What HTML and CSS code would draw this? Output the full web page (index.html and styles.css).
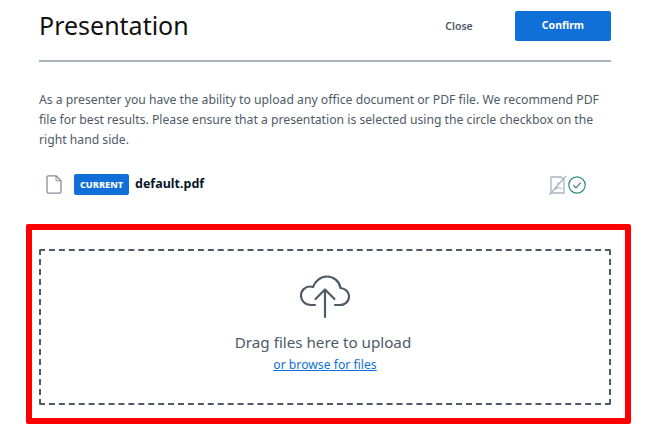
FILE: index.html
```html
<!DOCTYPE html>
<html lang="en">
<head>
<meta charset="utf-8">
<title>Presentation</title>
<link rel="stylesheet" href="styles.css">
</head>
<body>
<main class="modal">
  <header class="header">
    <h1 class="title">Presentation</h1>
    <div class="actions">
      <button class="btn-close" type="button">Close</button>
      <button class="btn-confirm" type="button">Confirm</button>
    </div>
  </header>
  <p class="intro">As a presenter you have the ability to upload any office document or PDF file. We recommend PDF file for best results. Please ensure that a presentation is selected using the circle checkbox on the right hand side.</p>
  <div class="file-row">
    <svg class="file-icon" width="16" height="19" viewBox="0 0 16 19" fill="none" stroke="#868e96" stroke-width="1.3" stroke-linejoin="round"><path d="M2 .8h8l5 5v10.900a1.400 1.400 0 0 1-1.400 1.400H2.400A1.400 1.400 0 0 1 1 16.700V2.200A1.400 1.400 0 0 1 2 .8z"/><path d="M10 .8v5h5" stroke-width="1"/></svg>
    <span class="badge">CURRENT</span>
    <span class="file-name">default.pdf</span>
    <span class="file-tools">
      <svg width="18" height="20" viewBox="0 0 18 20" fill="none" stroke="#a9b4c0" stroke-width="1.300"><path d="M2 2h10l3 3v13H2z"/><path d="M.5 19.500 17 1"/><path d="M6.500 15c1.500-2 3-5 2.500-8M5.500 14c3-1.500 5.500-1.500 7.500 0" stroke-width="1"/></svg>
      <svg width="18" height="18" viewBox="0 0 18 18" fill="none" stroke="#2a8a84" stroke-width="1.200"><circle cx="9" cy="9" r="8.200"/><path d="M5.300 9.200 8 11.800l4.800-5.200" stroke="#4e7a80"/></svg>
    </span>
  </div>
  <section class="highlight">
    <div class="dropzone">
      <svg class="cloud" width="50" height="44" viewBox="0 0 50 44" fill="none" stroke="#4e5a66" stroke-width="2.200" stroke-linecap="round" stroke-linejoin="round"><path d="M15 30H11C5 30 1 26 1 20.500 1 15.500 5 11.500 10 11.500c1 0 2 .2 3 .6C15 6 20.500 1.500 27 1.500c7 0 12.500 5 13.500 11.500C45.500 13.500 49 17 49 21.500 49 26.500 45 30 40 30h-5"/><path d="M25 42V14.500M15.500 24 25 14.500 34.500 24"/></svg>
      <div class="drop-title">Drag files here to upload</div>
      <a class="browse" href="#">or browse for files</a>
    </div>
  </section>
</main>
</body>
</html>
```

FILE: styles.css
```css
html, body {
  margin: 0;
  padding: 0;
  background: #fff;
}

body {
  font-family: "Noto Sans", "Open Sans", sans-serif;
  overflow: hidden;
}

.modal {
  width: 572px;
  margin-left: 39px;
}

.header {
  display: flex;
  justify-content: space-between;
  height: 60px;
  border-bottom: 2px solid #a7b3bd;
}

.title {
  margin: 6px 0 0;
  font-size: 25px;
  line-height: 38px;
  font-weight: 400;
  color: #111;
}

.actions {
  display: flex;
  align-items: flex-start;
  padding-top: 11px;
}

.btn-close {
  width: 42px;
  height: 29px;
  margin-right: 35px;
  padding: 0;
  border: 0;
  background: none;
  font: 600 10.500px "Noto Sans", sans-serif;
  color: #4e5a66;
}

.btn-confirm {
  width: 96px;
  height: 30px;
  padding: 0 0 2px;
  border: 0;
  border-radius: 2px;
  background: #1070d8;
  font: 700 10.500px "Noto Sans", sans-serif;
  color: #fff;
}

.intro {
  margin: 28px 0 0;
  font-size: 12.200px;
  line-height: 20px;
  color: #4e5a66;
}

.file-row {
  display: flex;
  align-items: center;
  height: 21px;
  margin-top: 24px;
  padding-left: 7px;
}

.file-icon {
  margin-right: 12px;
}

.badge {
  width: 55px;
  height: 21px;
  border-radius: 2px;
  background: #1070d8;
  font-size: 9.200px;
  font-weight: 800;
  line-height: 21px;
  text-align: center;
  color: #fff;
}

.file-name {
  margin-left: 6px;
  margin-top: -3px;
  font-size: 12.500px;
  font-weight: 700;
  color: #06172a;
}

.file-tools {
  display: flex;
  align-items: center;
  gap: 1px;
  margin-left: auto;
  margin-right: 25px;
}

.highlight {
  margin: 29px -20px 0 -13px;
  padding: 19px 14px 13px 7px;
  border: 6px solid #f00;
  border-radius: 2px;
}

.dropzone {
  display: flex;
  flex-direction: column;
  align-items: center;
  box-sizing: border-box;
  height: 156px;
  padding-top: 24px;
  border: 2px dashed #4e5a66;
  border-radius: 2px;
}

.drop-title {
  margin-top: 11px;
  padding-right: 4px;
  font-size: 15.200px;
  line-height: 24px;
  color: #4e5a66;
}

.browse {
  margin-top: 1px;
  font-size: 12.200px;
  line-height: 20px;
  color: #0f70d7;
}
```
